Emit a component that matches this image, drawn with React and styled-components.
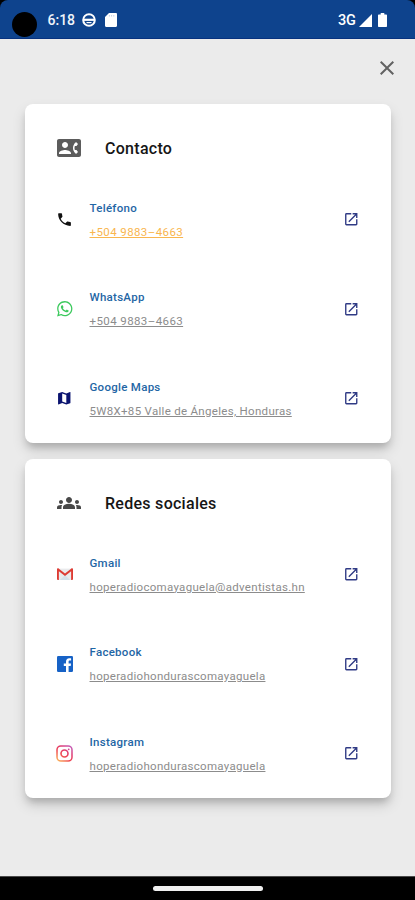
import React from 'react';
import styled, { createGlobalStyle } from 'styled-components';
import {
  MdClose,
  MdContactPhone,
  MdGroups,
  MdMap,
  MdOpenInNew,
  MdPhone,
} from 'react-icons/md';
import { FaWhatsapp } from 'react-icons/fa';

const GmailIcon = () => (
  <svg width="16" height="12.5" viewBox="0 0 17 13">
    <path d="M1.5.5h14v12h-14z" fill="#e9eaec" />
    <path d="M3 12.5 8.5 7.5l5.5 5z" fill="#d3e0ea" />
    <path d="M0 1.3C0 .3 1.2-.1 2 .6l6.5 5.1L15 .6c.8-.7 2-.3 2 .7v10.3c0 .6-.4 1-1 1h-1V3.3L8.5 8.4 2 3.3v9.3H1c-.6 0-1-.4-1-1z" fill="#dd3b33" />
  </svg>
);

const FacebookIcon = () => (
  <svg width="16" height="16" viewBox="0 0 16 16">
    <rect width="16" height="16" rx="1.2" fill="#1762c6" />
    <path d="M9 16v-6.1H6.8V7.4H9V5.7c0-2.2 1.3-3.4 3.2-3.4.9 0 1.7.1 1.9.1v2.2h-1.3c-1 0-1.2.5-1.2 1.2v1.6H14l-.3 2.5h-2.1V16z" fill="#fff" />
  </svg>
);

const InstagramIcon = () => (
  <svg width="17" height="17" viewBox="0 0 17 17" fill="none">
    <defs>
      <linearGradient id="insta" x1="2" y1="16" x2="14" y2="1" gradientUnits="userSpaceOnUse">
        <stop stopColor="#fbb45c" />
        <stop offset="0.4" stopColor="#ef4552" />
        <stop offset="0.7" stopColor="#df3d73" />
        <stop offset="1" stopColor="#c55bb5" />
      </linearGradient>
    </defs>
    <rect x="1" y="1" width="15" height="15" rx="3.8" stroke="url(#insta)" strokeWidth="1.5" />
    <circle cx="8.5" cy="8.5" r="3.5" stroke="url(#insta)" strokeWidth="1.6" />
    <circle cx="12.7" cy="4.3" r="0.9" fill="#d44792" />
  </svg>
);

const contact = [
  { title: 'Teléfono', text: '+504 9883–4663', icon: <MdPhone size={17} color="#111" />, active: true, spacing: 0.4 },
  { title: 'WhatsApp', text: '+504 9883–4663', icon: <FaWhatsapp size={17.5} color="#3cc95d" />, spacing: 0.4 },
  { title: 'Google Maps', text: '5W8X+85 Valle de Ángeles, Honduras', icon: <MdMap size={16.5} color="#0b1470" /> },
];

const social = [
  { title: 'Gmail', text: 'hoperadiocomayaguela@adventistas.hn', icon: <GmailIcon /> },
  { title: 'Facebook', text: 'hoperadiohondurascomayaguela', icon: <FacebookIcon /> },
  { title: 'Instagram', text: 'hoperadiohondurascomayaguela', icon: <InstagramIcon /> },
];

const App = () => (
  <Screen>
    <GlobalStyle />
    <StatusBar>
      <StatusGroup>
        <Camera />
        <Clock>6:18</Clock>
        <svg width="14" height="14" viewBox="0 0 14 14" fill="none" stroke="#fff">
          <circle cx="7" cy="7" r="5.8" strokeWidth="2" />
          <path d="M1.5 6.8h11" strokeWidth="2.2" />
          <path d="M4.5 9.600h5" strokeWidth="1.200" />
        </svg>
        <SdCard width="12" height="14" viewBox="0 0 12 14">
          <path d="M4 0h6.8c.7 0 1.200.5 1.200 1.200v11.600c0 .7-.5 1.200-1.200 1.200H1.200C.5 14 0 13.500 0 12.800V4z" fill="#fff" />
          <path d="M4.400 2v1.600M6.600 2v1.600M8.800 2v1.600" stroke="#c6d2e6" />
        </SdCard>
      </StatusGroup>
      <StatusGroup>
        <Network>3G</Network>
        <svg width="13" height="13" viewBox="0 0 13 13">
          <path d="M13 0v13H0z" fill="#fff" />
        </svg>
        <Battery width="9" height="14" viewBox="0 0 9 14">
          <path d="M2.700 0h3.600v1.400H8c.6 0 1 .4 1 1V13c0 .6-.4 1-1 1H1c-.6 0-1-.4-1-1V2.400c0-.6.4-1 1-1h1.700z" fill="#fff" />
        </Battery>
      </StatusGroup>
    </StatusBar>
    <Toolbar>
      <CloseButton aria-label="Cerrar">
        <MdClose size={24} />
      </CloseButton>
    </Toolbar>
    <Cards>
      <Section title="Contacto" icon={<MdContactPhone size={24} color="#5c5c5c" />} items={contact} />
      <Section title="Redes sociales" icon={<MdGroups size={24} color="#484848" />} items={social} />
    </Cards>
    <NavBar>
      <Handle />
    </NavBar>
  </Screen>
);

const Section = ({ title, icon, items }) => (
  <Card>
    <CardHeader>
      {icon}
      <CardTitle>{title}</CardTitle>
    </CardHeader>
    {items.map(item => <Item key={item.title} {...item} />)}
  </Card>
);

const Item = ({ title, text, icon, active, spacing = 0.3 }) => (
  <Row>
    <RowIcon>{icon}</RowIcon>
    <RowBody>
      <RowTitle>{title}</RowTitle>
      <RowLink $active={active} $spacing={spacing}>{text}</RowLink>
    </RowBody>
    <MdOpenInNew size={16.5} color="#303b85" />
  </Row>
);

const GlobalStyle = createGlobalStyle`
  * {
    box-sizing: border-box;
  }

  body {
    margin: 0;
    background: #000;
    font-family: Roboto, sans-serif;
  }

  svg {
    display: block;
    flex-shrink: 0;
  }
`;

const Screen = styled.div`
  display: flex;
  flex-direction: column;
  width: 415px;
  height: 900px;
  overflow: hidden;
  background: #000;
`;

const StatusBar = styled.div`
  display: flex;
  justify-content: space-between;
  height: 39px;
  padding: 0 28px 0 12px;
  background: #0e438d;
  border-bottom: 1px solid #07327f;
  border-radius: 8px 8px 0 0;
`;

const StatusGroup = styled.div`
  display: flex;
  align-items: center;
  padding-top: 2px;
`;

const Camera = styled.div`
  width: 25px;
  height: 25px;
  margin: 8px 10.5px 0 0;
  border-radius: 50%;
  background: #000;
`;

const Clock = styled.div`
  width: 34px;
  font-size: 14px;
  font-weight: 500;
  color: #f0f4fa;
`;

const SdCard = styled.svg`
  margin-left: 9px;
`;

const Network = styled.div`
  margin-right: 3px;
  font-size: 14.5px;
  font-weight: 500;
  color: #fff;
`;

const Battery = styled.svg`
  margin-left: 6px;
`;

const Toolbar = styled.div`
  display: flex;
  justify-content: flex-end;
  height: 65px;
  padding: 17px 16px 0 0;
  background: #ebebeb;
`;

const CloseButton = styled.button`
  width: 24px;
  height: 24px;
  padding: 0;
  border: 0;
  background: none;
  color: #626262;
`;

const Cards = styled.div`
  display: flex;
  flex: 1;
  flex-direction: column;
  gap: 16px;
  padding: 0 24px 0 25px;
  background: #ebebeb;
`;

const Card = styled.div`
  height: 339px;
  border-radius: 8px;
  background: #fff;
  box-shadow: 0 6px 7px -2px rgba(0, 0, 0, 0.17), 0 7px 14px rgba(0, 0, 0, 0.14);
`;

const CardHeader = styled.div`
  display: flex;
  align-items: center;
  height: 70.5px;
  padding: 17.5px 32px 0;
`;

const CardTitle = styled.div`
  margin-left: 24px;
  padding-top: 1px;
  font-size: 16px;
  font-weight: 500;
  letter-spacing: 0.28px;
  color: #161616;
`;

const Row = styled.div`
  display: flex;
  align-items: center;
  height: 89.5px;
  padding: 0 32px 0 31.5px;
`;

const RowIcon = styled.div`
  display: flex;
  justify-content: center;
  width: 16px;
  margin-right: 17px;
`;

const RowBody = styled.div`
  display: flex;
  flex: 1;
  flex-direction: column;
  align-items: flex-start;
  gap: 10px;
  padding-top: 1.5px;
`;

const RowTitle = styled.div`
  font-size: 11.5px;
  font-weight: 500;
  line-height: 14px;
  letter-spacing: 0.28px;
  color: #1f66a5;
`;

const RowLink = styled.a`
  font-size: 11.5px;
  line-height: 15px;
  letter-spacing: ${props => props.$spacing}px;
  white-space: nowrap;
  text-decoration: underline;
  color: ${props => props.$active ? '#f9b64f' : '#8c8c8c'};
`;

const NavBar = styled.div`
  display: flex;
  justify-content: center;
  height: 24px;
  padding-top: 9px;
  border-top: 1px solid #4a4a4a;
  background: #000;
`;

const Handle = styled.div`
  width: 110px;
  height: 5px;
  border-radius: 3px;
  background: #f0f0f0;
`;

export default App;
